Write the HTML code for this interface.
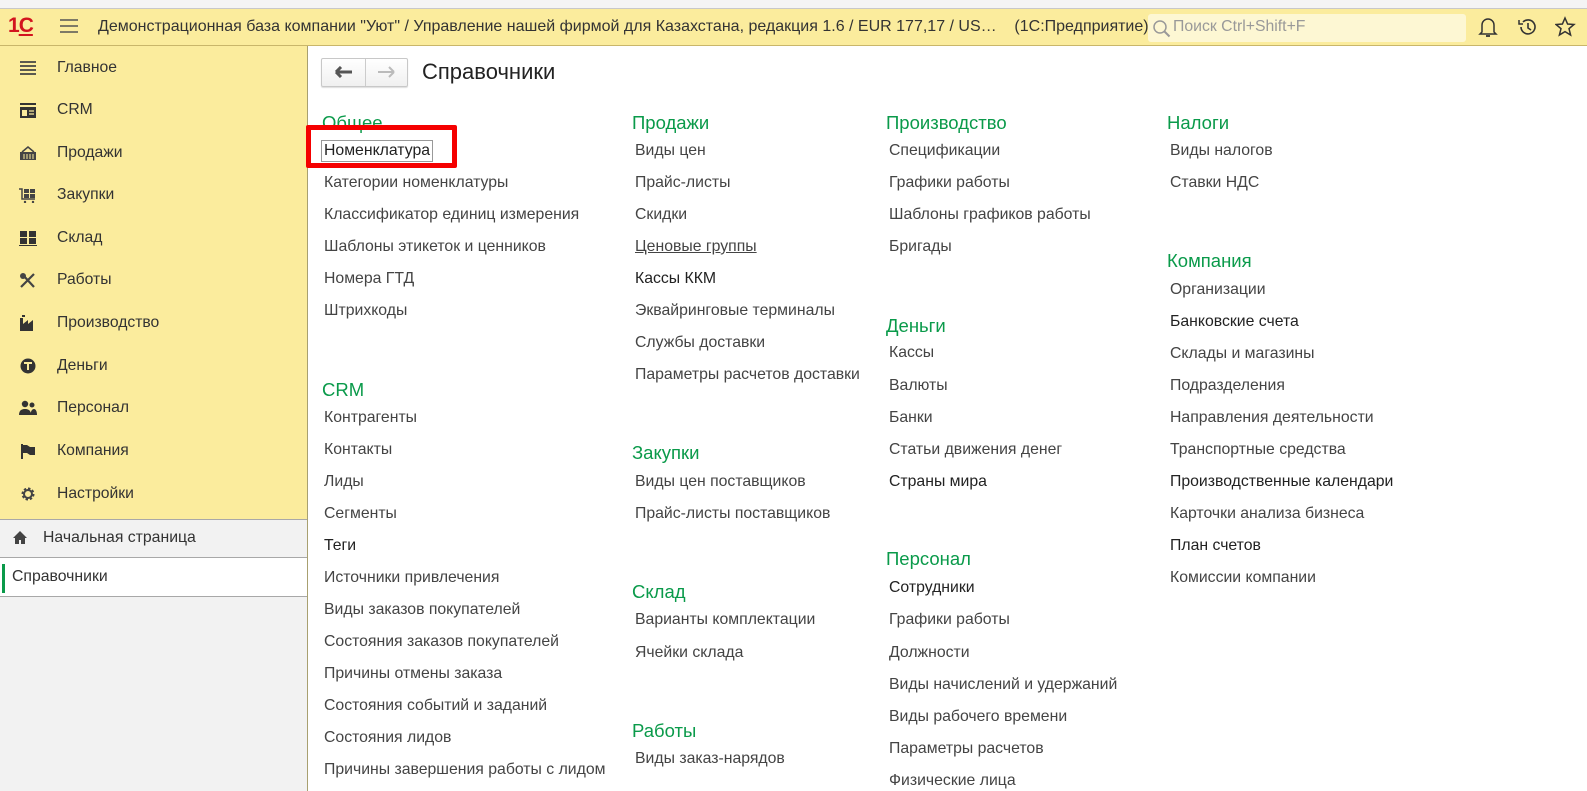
<!DOCTYPE html>
<html><head><meta charset="utf-8"><style>
*{margin:0;padding:0;box-sizing:border-box}
body{width:1587px;height:791px;overflow:hidden;background:#fff;font-family:"Liberation Sans","Noto Sans CJK SC",sans-serif;position:relative;color:#404040}
.a{position:absolute;white-space:nowrap}
.top{left:0;top:0;width:1587px;height:9px;background:#f4f4f4;border-bottom:1px solid #c8c8c8}
.hdr{left:0;top:9px;width:1587px;height:37px;background:#fbec9d;border-bottom:1px solid #c9b66a}
.side{left:0;top:46px;width:308px;height:745px;background:#f2f2f2;border-right:1px solid #a8a070}
.yel{left:0;top:46px;width:307px;height:474px;background:#fbec9d;border-bottom:1px solid #a8a8a8}
.si{left:57px;font-size:15.7px;color:#333;line-height:20px}
.ic{left:19px;width:18px;height:16px}
.h{font-size:18.5px;color:#0a9a4a;line-height:22px}
.t{font-size:15.8px;color:#444;line-height:20px}
.d{color:#222}
</style></head><body>
<div class="a top"></div>
<div class="a hdr"></div>
<div class="a" style="left:8px;top:15px;font-size:21px;font-weight:bold;color:#d2141e;letter-spacing:-1px;line-height:22px">1<span style="text-decoration:underline">C</span></div>
<svg class="a" style="left:60px;top:19px" width="18" height="14"><path d="M0 1h18M0 7h18M0 13h18" stroke="#555" stroke-width="1.6"/></svg>
<div class="a" style="left:98px;top:17px;font-size:16px;color:#333;line-height:20px">Демонстрационная база компании "Уют" / Управление нашей фирмой для Казахстана, редакция 1.6 / EUR 177,17 / US…&nbsp;&nbsp;&nbsp;&nbsp;(1С:Предприятие)</div>
<div class="a" style="left:1148px;top:14px;width:318px;height:28px;background:#fdf7d3;border-radius:3px"></div>
<svg class="a" style="left:1152px;top:19px" width="20" height="20"><circle cx="8" cy="8" r="6" stroke="#999" stroke-width="1.5" fill="none"/><path d="M12.5 12.5l5 5" stroke="#999" stroke-width="2"/></svg>
<div class="a" style="left:1173px;top:17px;font-size:15.8px;color:#999;line-height:20px">Поиск Ctrl+Shift+F</div>
<svg class="a" style="left:1478px;top:16px" width="20" height="22"><path d="M4 16V9a6 6 0 0 1 12 0v7l2 2H2z" fill="none" stroke="#333" stroke-width="1.5"/><path d="M8 20h4" stroke="#333" stroke-width="1.8"/></svg>
<svg class="a" style="left:1517px;top:17px" width="22" height="20"><path d="M4 10a7 7 0 1 0 2-5" fill="none" stroke="#333" stroke-width="1.6"/><path d="M2 3v4h4" fill="none" stroke="#333" stroke-width="1.5"/><path d="M11 6v5l3 2" fill="none" stroke="#333" stroke-width="1.6"/></svg>
<svg class="a" style="left:1555px;top:16px" width="32" height="22"><path d="M10 2l2.6 6 6.4.5-5 4.2 1.6 6.3L10 15.6 4.4 19l1.6-6.3-5-4.2 6.4-.5z" fill="none" stroke="#333" stroke-width="1.5"/></svg>

<div class="a side"></div>
<div class="a yel"></div>
<svg class="a ic" style="top:60px" width="18" height="16"><path d="M1 2h16M1 6h16M1 10h16M1 14h16" stroke="#444" stroke-width="1.8"/></svg>
<svg class="a ic" style="top:102px" width="18" height="16"><rect x="1" y="5" width="16" height="11" fill="#333"/><rect x="1" y="1" width="16" height="2" fill="#333"/><rect x="3" y="8" width="5" height="6" fill="#fbec9d"/><path d="M10 9h5M10 12h5" stroke="#fbec9d" stroke-width="1.3"/></svg>
<svg class="a ic" style="top:145px" width="18" height="16"><path d="M3 7L9 2l6 5" fill="none" stroke="#444" stroke-width="1.5"/><rect x="1" y="7" width="16" height="8" fill="#444"/><path d="M5 9v5M8 9v5M11 9v5M14 9v5" stroke="#fbec9d" stroke-width="1"/></svg>
<svg class="a ic" style="top:187px" width="18" height="16"><path d="M0 2h3v10h13" fill="none" stroke="#444" stroke-width="1.5"/><rect x="5" y="2" width="5" height="4" fill="#444"/><rect x="11" y="2" width="5" height="4" fill="#444"/><rect x="5" y="7" width="5" height="4" fill="#444"/><rect x="11" y="7" width="5" height="4" fill="#444"/><circle cx="6" cy="15" r="1.2" fill="#444"/><circle cx="14" cy="15" r="1.2" fill="#444"/></svg>
<svg class="a ic" style="top:230px" width="18" height="16"><rect x="1" y="1" width="7" height="6" fill="#333"/><rect x="10" y="1" width="7" height="6" fill="#333"/><rect x="1" y="8" width="7" height="6" fill="#333"/><rect x="10" y="8" width="7" height="6" fill="#333"/><path d="M0 15.5h18" stroke="#333"/></svg>
<svg class="a ic" style="top:272px" width="18" height="16"><path d="M2 15L15 2M3 2l12 13" stroke="#444" stroke-width="2.2"/><circle cx="4" cy="4" r="3" fill="#444"/></svg>
<svg class="a ic" style="top:315px" width="18" height="16"><path d="M1 16V3h3v6l5-4v4l5-4v11z" fill="#333"/><rect x="3" y="0" width="3" height="2" fill="#333"/></svg>
<svg class="a ic" style="top:358px" width="18" height="16"><circle cx="9" cy="8" r="7.5" fill="#333"/><path d="M5 5h8M9 5v7" stroke="#fbec9d" stroke-width="2"/></svg>
<svg class="a ic" style="top:400px" width="18" height="16"><circle cx="6" cy="4" r="3.2" fill="#333"/><path d="M0 15c0-5 3-6 6-6s6 1 6 6z" fill="#333"/><circle cx="13" cy="5" r="2.5" fill="#333"/><path d="M11 15c1-4 2-6 4-6s3 3 3 6z" fill="#333"/></svg>
<svg class="a ic" style="top:443px" width="18" height="16"><path d="M3 1v15" stroke="#333" stroke-width="2"/><path d="M4 2h4l3 2h5v8h-5l-3-2H4z" fill="#333"/></svg>
<svg class="a ic" style="top:486px" width="18" height="16"><circle cx="9" cy="8" r="5" fill="none" stroke="#444" stroke-width="3" stroke-dasharray="2.2 1.7"/><circle cx="9" cy="8" r="4" fill="none" stroke="#444" stroke-width="2"/></svg>
<div class="a si" style="top:58px">Главное</div>
<div class="a si" style="top:100px">CRM</div>
<div class="a si" style="top:143px">Продажи</div>
<div class="a si" style="top:185px">Закупки</div>
<div class="a si" style="top:228px">Склад</div>
<div class="a si" style="top:270px">Работы</div>
<div class="a si" style="top:313px">Производство</div>
<div class="a si" style="top:356px">Деньги</div>
<div class="a si" style="top:398px">Персонал</div>
<div class="a si" style="top:441px">Компания</div>
<div class="a si" style="top:484px">Настройки</div>
<svg class="a" style="left:12px;top:530px" width="16" height="15"><path d="M8 1L1 8h2v6h4v-4h2v4h4V8h2z" fill="#444"/></svg>
<div class="a" style="left:43px;top:528px;font-size:15.8px;color:#333;line-height:20px">Начальная страница</div>
<div class="a" style="left:0;top:557px;width:307px;height:40px;background:#fff;border-top:1px solid #a8a8a8;border-bottom:1px solid #a8a8a8"></div>
<div class="a" style="left:2px;top:564px;width:3px;height:29px;background:#0a9a4a"></div>
<div class="a" style="left:12px;top:567px;font-size:15.8px;color:#333;line-height:20px">Справочники</div>

<div class="a" style="left:321px;top:58px;width:87px;height:29px;border:1px solid #c8c8c8;border-radius:2px;background:linear-gradient(#fff,#f0f0f0);box-shadow:0 1px 1px #ddd"></div>
<div class="a" style="left:365px;top:59px;width:1px;height:27px;background:#ccc"></div>
<svg class="a" style="left:334px;top:66px" width="20" height="12"><path d="M2 6h16M2 6l5-5M2 6l5 5" stroke="#555" stroke-width="3" fill="none"/></svg>
<svg class="a" style="left:376px;top:66px" width="20" height="12"><path d="M18 6H2M18 6l-5-5M18 6l-5 5" stroke="#bbb" stroke-width="2" fill="none"/></svg>
<div class="a" style="left:422px;top:59px;font-size:22px;color:#222;line-height:26px">Справочники</div>

<div class="a h" style="left:322px;top:112px">Общее</div>
<div class="a" style="left:321px;top:140px;width:112px;height:22px;border:1px solid #999"></div>
<div class="a t d" style="left:324px;top:141px">Номенклатура</div>
<div class="a" style="left:306px;top:125px;width:151px;height:43px;border:5px solid #f50000;border-radius:2px"></div>
<div class="a t" style="left:324px;top:173px">Категории номенклатуры</div>
<div class="a t" style="left:324px;top:205px">Классификатор единиц измерения</div>
<div class="a t" style="left:324px;top:237px">Шаблоны этикеток и ценников</div>
<div class="a t" style="left:324px;top:269px">Номера ГТД</div>
<div class="a t" style="left:324px;top:301px">Штрихкоды</div>
<div class="a h" style="left:322px;top:379px">CRM</div>
<div class="a t" style="left:324px;top:408px">Контрагенты</div>
<div class="a t" style="left:324px;top:440px">Контакты</div>
<div class="a t" style="left:324px;top:472px">Лиды</div>
<div class="a t" style="left:324px;top:504px">Сегменты</div>
<div class="a t d" style="left:324px;top:536px">Теги</div>
<div class="a t" style="left:324px;top:568px">Источники привлечения</div>
<div class="a t" style="left:324px;top:600px">Виды заказов покупателей</div>
<div class="a t" style="left:324px;top:632px">Состояния заказов покупателей</div>
<div class="a t" style="left:324px;top:664px">Причины отмены заказа</div>
<div class="a t" style="left:324px;top:696px">Состояния событий и заданий</div>
<div class="a t" style="left:324px;top:728px">Состояния лидов</div>
<div class="a t" style="left:324px;top:760px">Причины завершения работы с лидом</div>

<div class="a h" style="left:632px;top:112px">Продажи</div>
<div class="a t" style="left:635px;top:141px">Виды цен</div>
<div class="a t" style="left:635px;top:173px">Прайс-листы</div>
<div class="a t" style="left:635px;top:205px">Скидки</div>
<div class="a t" style="left:635px;top:237px;text-decoration:underline">Ценовые группы</div>
<div class="a t d" style="left:635px;top:269px">Кассы ККМ</div>
<div class="a t" style="left:635px;top:301px">Эквайринговые терминалы</div>
<div class="a t" style="left:635px;top:333px">Службы доставки</div>
<div class="a t" style="left:635px;top:365px">Параметры расчетов доставки</div>
<div class="a h" style="left:632px;top:442px">Закупки</div>
<div class="a t" style="left:635px;top:472px">Виды цен поставщиков</div>
<div class="a t" style="left:635px;top:504px">Прайс-листы поставщиков</div>
<div class="a h" style="left:632px;top:581px">Склад</div>
<div class="a t" style="left:635px;top:610px">Варианты комплектации</div>
<div class="a t" style="left:635px;top:643px">Ячейки склада</div>
<div class="a h" style="left:632px;top:720px">Работы</div>
<div class="a t" style="left:635px;top:749px">Виды заказ-нарядов</div>

<div class="a h" style="left:886px;top:112px">Производство</div>
<div class="a t" style="left:889px;top:141px">Спецификации</div>
<div class="a t" style="left:889px;top:173px">Графики работы</div>
<div class="a t" style="left:889px;top:205px">Шаблоны графиков работы</div>
<div class="a t" style="left:889px;top:237px">Бригады</div>
<div class="a h" style="left:886px;top:315px">Деньги</div>
<div class="a t" style="left:889px;top:343px">Кассы</div>
<div class="a t" style="left:889px;top:376px">Валюты</div>
<div class="a t" style="left:889px;top:408px">Банки</div>
<div class="a t" style="left:889px;top:440px">Статьи движения денег</div>
<div class="a t d" style="left:889px;top:472px">Страны мира</div>
<div class="a h" style="left:886px;top:548px">Персонал</div>
<div class="a t d" style="left:889px;top:578px">Сотрудники</div>
<div class="a t" style="left:889px;top:610px">Графики работы</div>
<div class="a t" style="left:889px;top:643px">Должности</div>
<div class="a t" style="left:889px;top:675px">Виды начислений и удержаний</div>
<div class="a t" style="left:889px;top:707px">Виды рабочего времени</div>
<div class="a t" style="left:889px;top:739px">Параметры расчетов</div>
<div class="a t" style="left:889px;top:771px">Физические лица</div>

<div class="a h" style="left:1167px;top:112px">Налоги</div>
<div class="a t" style="left:1170px;top:141px">Виды налогов</div>
<div class="a t" style="left:1170px;top:173px">Ставки НДС</div>
<div class="a h" style="left:1167px;top:250px">Компания</div>
<div class="a t" style="left:1170px;top:280px">Организации</div>
<div class="a t d" style="left:1170px;top:312px">Банковские счета</div>
<div class="a t" style="left:1170px;top:344px">Склады и магазины</div>
<div class="a t" style="left:1170px;top:376px">Подразделения</div>
<div class="a t" style="left:1170px;top:408px">Направления деятельности</div>
<div class="a t" style="left:1170px;top:440px">Транспортные средства</div>
<div class="a t d" style="left:1170px;top:472px">Производственные календари</div>
<div class="a t" style="left:1170px;top:504px">Карточки анализа бизнеса</div>
<div class="a t d" style="left:1170px;top:536px">План счетов</div>
<div class="a t" style="left:1170px;top:568px">Комиссии компании</div>
</body></html>
